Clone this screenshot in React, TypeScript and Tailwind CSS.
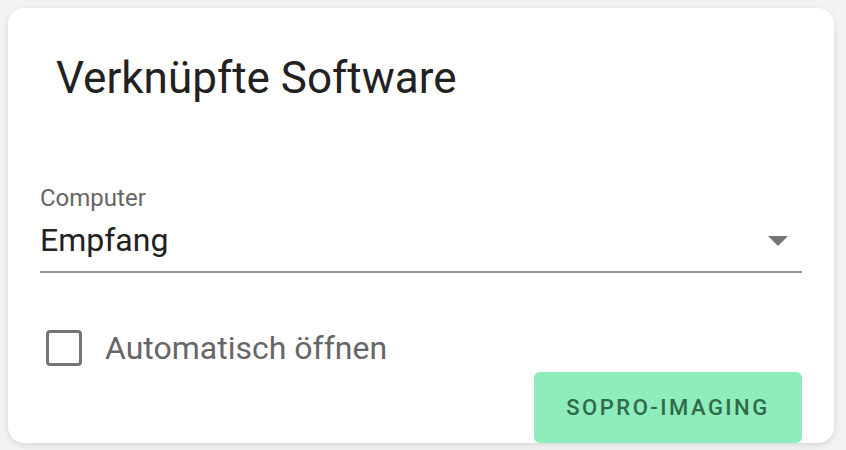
export default function App() {
    return (
        <div className="w-[846px] h-[450px] bg-[#f3f3f3] pt-2 pl-2 overflow-hidden" style={{ fontFamily: "Roboto, 'Noto Sans', sans-serif" }}>
            <div className="w-[826px] h-[435px] bg-white rounded-[16px] shadow-[0_2px_6px_rgba(0,0,0,0.12)] flex flex-col">
                {/* Titel */}
                <h1 className="pl-[48px] pt-[44px] text-[44px] leading-[52px] text-[#212121] font-normal">
                    Verknüpfte Software
                </h1>

                {/* Auswahl Computer */}
                <div className="mx-[32px] mt-[80px] border-b-2 border-[#949494]">
                    <div className="text-[24px] leading-[28px] text-[#666666]">Computer</div>
                    <div className="flex items-center justify-between h-[36px] mt-[10px] mb-[13px]">
                        <span className="text-[32px] leading-[36px] text-[#212121]">Empfang</span>
                        <svg width="20" height="10" viewBox="0 0 20 10" className="mr-[14px] mt-[1px]">
                            <path d="M0 0 L20 0 L10 10 Z" fill="#757575" />
                        </svg>
                    </div>
                </div>

                {/* Checkbox */}
                <label className="flex items-center gap-[23px] ml-[38px] mt-[57px] h-[36px]">
                    <span className="w-[36px] h-[36px] border-[3px] border-[#757575] rounded-[4px]" />
                    <span className="text-[32px] leading-[36px] text-[#666666]">Automatisch öffnen</span>
                </label>

                {/* Button */}
                <div className="flex justify-end mr-[32px] mt-auto">
                    <button className="w-[268px] h-[71px] bg-[#8eedbb] rounded-[6px] text-[#2f6b4a] text-[22px] font-medium tracking-[2.5px]">
                        SOPRO-IMAGING
                    </button>
                </div>
            </div>
        </div>
    )
}
